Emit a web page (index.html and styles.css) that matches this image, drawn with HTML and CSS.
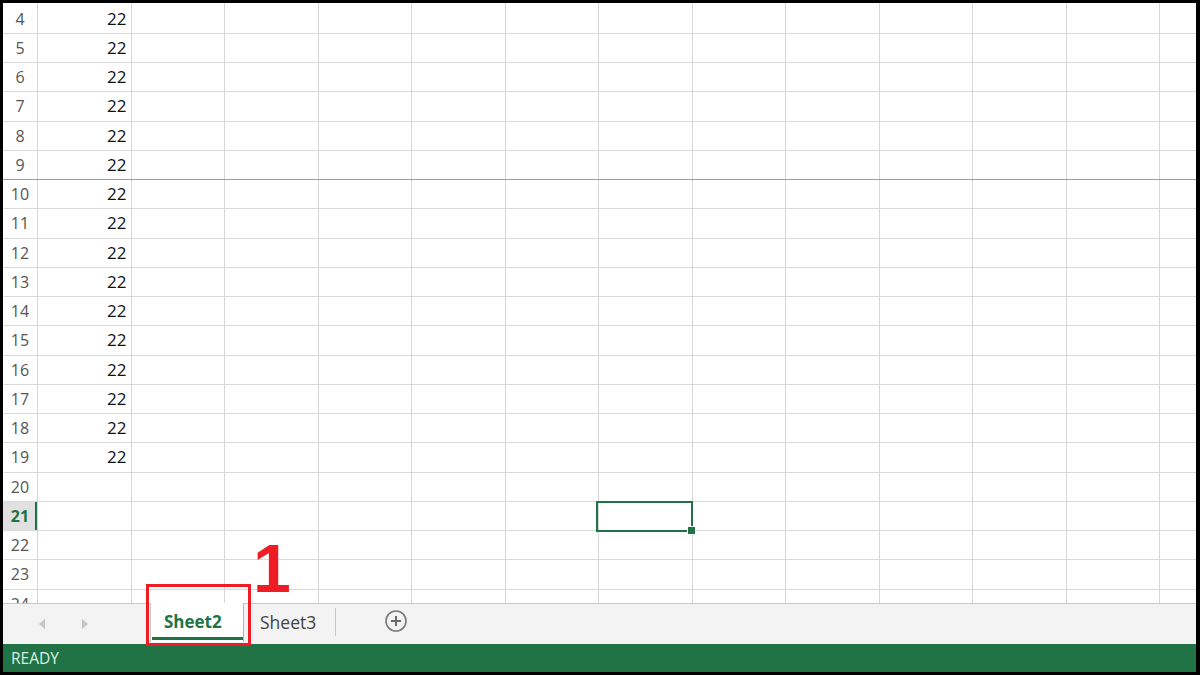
FILE: index.html
```html
<!DOCTYPE html>
<html lang="en">

<head>
    <meta charset="UTF-8">
    <meta name="viewport" content="width=device-width, initial-scale=1.0">
    <title>Book1 - Excel</title>
    <link rel="stylesheet" href="styles.css">
</head>

<body>
    <div class="app">
        <div class="sheet">
            <!-- vertical gridlines -->
            <div class="cols">
                <div class="col"></div><div class="col"></div><div class="col"></div><div class="col"></div>
                <div class="col"></div><div class="col"></div><div class="col"></div><div class="col"></div>
                <div class="col"></div><div class="col"></div><div class="col"></div><div class="col"></div>
                <div class="col"></div><div class="col"></div>
            </div>

            <div class="row"><div class="rh">4</div><div class="num">22</div></div>
            <div class="row"><div class="rh">5</div><div class="num">22</div></div>
            <div class="row"><div class="rh">6</div><div class="num">22</div></div>
            <div class="row"><div class="rh">7</div><div class="num">22</div></div>
            <div class="row"><div class="rh">8</div><div class="num">22</div></div>
            <div class="row freeze"><div class="rh">9</div><div class="num">22</div></div>
            <div class="row"><div class="rh">10</div><div class="num">22</div></div>
            <div class="row"><div class="rh">11</div><div class="num">22</div></div>
            <div class="row"><div class="rh">12</div><div class="num">22</div></div>
            <div class="row"><div class="rh">13</div><div class="num">22</div></div>
            <div class="row"><div class="rh">14</div><div class="num">22</div></div>
            <div class="row"><div class="rh">15</div><div class="num">22</div></div>
            <div class="row"><div class="rh">16</div><div class="num">22</div></div>
            <div class="row"><div class="rh">17</div><div class="num">22</div></div>
            <div class="row"><div class="rh">18</div><div class="num">22</div></div>
            <div class="row"><div class="rh">19</div><div class="num">22</div></div>
            <div class="row"><div class="rh">20</div></div>
            <div class="row"><div class="rh active">21</div><div class="sel"></div></div>
            <div class="row"><div class="rh">22</div></div>
            <div class="row"><div class="rh">23</div></div>
            <div class="row"><div class="rh">24</div></div>
        </div>

        <div class="tabbar">
            <div class="nav">
                <span class="arrow left"></span>
                <span class="arrow right"></span>
            </div>
            <div class="tab current">Sheet2</div>
            <div class="tab">Sheet3</div>
            <div class="sep"></div>
            <div class="add">
                <svg width="22" height="22" viewBox="0 0 22 22">
                    <circle cx="11" cy="11" r="10" fill="none" stroke="#7a7a7a" stroke-width="1.6" />
                    <path d="M11 6v10M6 11h10" stroke="#6a6a6a" stroke-width="2" />
                </svg>
            </div>
        </div>

        <div class="status">READY</div>

        <!-- tutorial annotation -->
        <div class="mark-box"></div>
        <div class="mark-num">1</div>
    </div>
</body>

</html>
```

FILE: styles.css
```css
* {
    margin: 0;
    padding: 0;
    box-sizing: border-box;
}

body {
    background: #000;
    font-family: 'Open Sans', 'Noto Sans', sans-serif;
}

.app {
    position: relative;
    width: 1193px;
    height: 669px;
    margin: 3px 4px 3px 3px;
    background: #fff;
    display: flex;
    flex-direction: column;
    overflow: hidden;
}

/* Grid */
.sheet {
    position: relative;
    flex: 1;
    padding-top: 1.6px;
    overflow: hidden;
}

.cols {
    position: absolute;
    top: 0;
    bottom: 0;
    left: 34px;
    display: flex;
}

.col {
    flex: none;
    width: 93.5px;
    border-left: 1px solid #d6d6d6;
}

.row {
    position: relative;
    display: grid;
    grid-template-columns: 34px repeat(13, 93.5px);
    height: 29.25px;
    border-bottom: 1px solid #dadada;
}

.row.freeze {
    border-bottom-color: #9e9e9e;
}

.rh {
    background: #fff;
    text-align: center;
    font-size: 16px;
    line-height: 28px;
    color: #555;
}

.rh.active {
    background: #e1e1e1;
    color: #217346;
    font-weight: bold;
    box-shadow: inset -2px 0 0 #217346;
}

.num {
    text-align: right;
    padding-right: 4px;
    font-size: 17px;
    line-height: 28px;
    color: #111;
}

.sel {
    grid-column: 8;
    position: relative;
}

.sel::before {
    content: "";
    position: absolute;
    top: -1px;
    right: -1px;
    bottom: -2px;
    left: -2px;
    border: 2px solid #217346;
}

.sel::after {
    content: "";
    position: absolute;
    right: -4px;
    bottom: -5px;
    width: 7px;
    height: 7px;
    background: #217346;
    border: 1px solid #fff;
}

/* Sheet tabs */
.tabbar {
    height: 41px;
    background: #f3f3f3;
    border-top: 1px solid #c6c6c6;
    display: flex;
    align-items: flex-start;
    padding-left: 36px;
}

.nav {
    width: 111px;
    height: 40px;
    display: flex;
    align-items: center;
    gap: 37px;
}

.arrow {
    width: 0;
    height: 0;
    border-top: 5px solid transparent;
    border-bottom: 5px solid transparent;
}

.arrow.left {
    border-right: 6px solid #c4c4c4;
}

.arrow.right {
    border-left: 6px solid #c4c4c4;
}

.tab {
    width: 91px;
    height: 38px;
    line-height: 37px;
    padding-left: 16px;
    font-size: 17.5px;
    color: #444;
}

.tab.current {
    position: relative;
    width: 94px;
    margin-top: -1px;
    height: 39px;
    padding-left: 13px;
    background: #fff;
    border-left: 1px solid #c6c6c6;
    border-right: 1px solid #b4b4b4;
    font-size: 17px;
    font-weight: bold;
    color: #217346;
}

.tab.current::after {
    content: "";
    position: absolute;
    left: 1px;
    right: 0;
    bottom: 2px;
    height: 3px;
    background: #217346;
}

.sep {
    width: 1px;
    height: 28px;
    margin-top: 4px;
    background: #c6c6c6;
}

.add {
    margin-left: 49px;
    margin-top: 6px;
    height: 22px;
}

/* Status bar */
.status {
    height: 28px;
    background: #217346;
    color: #dcefe3;
    font-size: 15.5px;
    line-height: 28px;
    padding-left: 8px;
}

/* Annotation */
.mark-box {
    position: absolute;
    left: 143px;
    top: 581px;
    width: 105px;
    height: 62px;
    border: 3px solid #ee1c24;
}

.mark-num {
    position: absolute;
    left: 250px;
    top: 531px;
    font-family: 'Liberation Sans', Arial, sans-serif;
    font-weight: bold;
    font-size: 68px;
    line-height: 68px;
    color: #ee1c24;
}
```
